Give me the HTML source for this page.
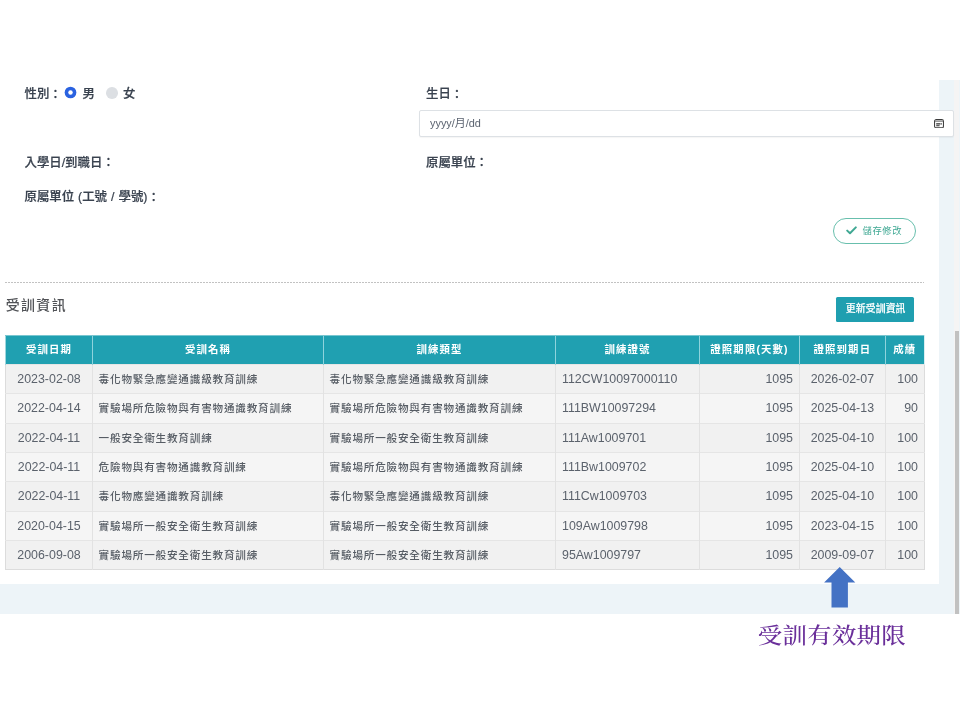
<!DOCTYPE html>
<html lang="zh-Hant">
<head>
<meta charset="utf-8">
<title>受訓資訊</title>
<style>
*{box-sizing:border-box;margin:0;padding:0}
html,body{width:960px;height:720px;overflow:hidden;background:#fff}
body{position:relative;will-change:transform;font-family:"Liberation Sans","Noto Sans CJK TC",sans-serif;color:#3a4351}
.abs{position:absolute}
#shot{left:0;top:80px;width:960px;height:534px;background:#edf4f8;overflow:hidden}
#panel{left:0;top:0;width:939px;height:504px;background:#fff}
#track{left:954px;top:0;width:5px;height:534px;background:#f5f4f4}
#thumb{left:955px;top:251px;width:4px;height:283px;background:#c1c1c1}
.lbl{-webkit-text-stroke:.22px #39424f;word-spacing:.6px;font-size:12.4px;font-weight:500;color:#39424f;white-space:nowrap;line-height:16px;letter-spacing:0}
.k{position:relative;top:.9px}
.radio{width:11.6px;height:11.6px;border-radius:50%}
#dinput{left:419px;top:110px;width:535px;height:27px;background:#fff;border:1px solid #dde1e5;border-radius:2px;box-shadow:0 1px 1px rgba(0,0,0,.04)}
#dinput span{position:absolute;left:10px;top:5px;font-size:10.9px;line-height:14px;color:#5b6370;white-space:nowrap}
#save{left:833px;top:218px;width:82.5px;height:26px;border:1px solid #68bfad;border-radius:14px;background:#fff}
#save span{position:absolute;left:28.5px;top:5.2px;letter-spacing:.6px;font-size:9.3px;line-height:14px;color:#3fa893;white-space:nowrap}
#dots{left:5px;top:282px;width:919px;height:1px;background:repeating-linear-gradient(90deg,#c2c2c2 0,#c2c2c2 2px,transparent 2px,transparent 3px)}
#h2{left:5.7px;top:295.6px;font-size:13.9px;letter-spacing:1.45px;line-height:18px;font-weight:500;color:#505256;white-space:nowrap}
#upd{-webkit-text-stroke:.2px #fff;padding-left:1.4px;left:836px;top:297px;width:78px;height:25px;background:#1f9fb0;border-radius:1.5px;color:#fff;font-size:9.8px;letter-spacing:.15px;font-weight:500;line-height:23.8px;text-align:center;white-space:nowrap}
table{position:absolute;left:5px;top:335px;width:919px;border-collapse:collapse;table-layout:fixed;border:1px solid #dcdcdc}
th{height:28.5px;background:#20a0b1;color:#fff;font-size:10.4px;font-weight:700;text-align:center;border-left:1px solid #8fd3dc;letter-spacing:1.15px;padding:0 0 1.8px 0;white-space:nowrap}
th{border-top:1px solid #79c6d0}
th:first-child{border-left:1px solid #a0d7de}
th:last-child{border-right:1px solid #d9eef1}
td{height:29px;font-size:12.4px;color:#5b626c;border-left:1px solid #e2e2e2;border-top:1px solid #e5e5e5;padding:0 6px;white-space:nowrap;overflow:hidden}
td:first-child{border-left:none}
td.c{font-size:10.6px;letter-spacing:.8px;font-weight:500;color:#565c64;padding-left:5.6px;padding-bottom:1px}
td.d{text-align:center;padding:0}
td.r{text-align:right;padding-right:6px}
tbody tr:nth-child(2) td,tbody tr:nth-child(5) td{height:30px}
tbody tr:nth-child(odd) td{background:#f1f1f1}
tbody tr:nth-child(even) td{background:#f5f5f5}
#cap{left:757.8px;top:619.6px;letter-spacing:.2px;transform:scaleY(.88);transform-origin:0 0;font-family:"Liberation Serif","Noto Serif CJK TC","Noto Serif CJK SC",serif;font-size:24.5px;line-height:36px;color:#6a2f9a;white-space:nowrap;font-weight:500}
</style>
</head>
<body>
<div id="shot" class="abs">
  <div id="panel" class="abs"></div>
  <div id="track" class="abs"></div>
  <div id="thumb" class="abs"></div>
</div>

<div class="abs lbl" style="left:24.5px;top:86.4px">性別<span class="k">：</span></div>
<svg class="abs" style="left:64.3px;top:86.1px" width="13" height="13" viewBox="0 0 13 13"><circle cx="6.5" cy="6.5" r="5.85" fill="#2a62e0"/><circle cx="6.5" cy="6.5" r="2.25" fill="#fff"/></svg>
<div class="abs lbl" style="left:82.5px;top:86.4px">男</div>
<div class="abs radio" style="left:106px;top:87.2px;background:#dcdfe3"></div>
<div class="abs lbl" style="left:123px;top:86.4px">女</div>

<div class="abs lbl" style="left:426px;top:86.4px">生日<span class="k">：</span></div>
<div id="dinput" class="abs"><span>yyyy/月/dd</span>
  <svg class="abs" style="left:514px;top:7.6px" width="10" height="9.4" viewBox="0 0 10 9.4"><rect x=".55" y=".55" width="8.9" height="8.3" rx="1.7" fill="#fff" stroke="#3c3c3c" stroke-width="1.05"/><path d="M1 2.1H9" stroke="#8a8a8a" stroke-width="1.5"/><path d="M2.2 4.9H6.6M7.1 4.9H7.9M2.2 6.7H5.6" stroke="#2e2e2e" stroke-width="1.05"/></svg>
</div>

<div class="abs lbl" style="left:24.5px;top:154.5px">入學日/到職日<span class="k">：</span></div>
<div class="abs lbl" style="left:426px;top:154.5px">原屬單位<span class="k">：</span></div>
<div class="abs lbl" style="left:24.5px;top:189.3px">原屬單位 (工號 / 學號)<span class="k">：</span></div>

<div id="save" class="abs">
  <svg class="abs" style="left:12.3px;top:6.8px" width="11" height="9" viewBox="0 0 11 9"><path d="M1.2 4.6L4 7.3L9.8 1.4" fill="none" stroke="#3fa893" stroke-width="2" stroke-linecap="round" stroke-linejoin="round"/></svg>
  <span>儲存修改</span>
</div>

<div id="dots" class="abs"></div>
<div id="h2" class="abs">受訓資訊</div>
<div id="upd" class="abs">更新受訓資訊</div>

<table>
<colgroup><col style="width:87px"><col style="width:231px"><col style="width:232px"><col style="width:144px"><col style="width:100px"><col style="width:85.7px"><col style="width:39.3px"></colgroup>
<thead><tr><th>受訓日期</th><th>受訓名稱</th><th>訓練類型</th><th>訓練證號</th><th>證照期限(天數)</th><th>證照到期日</th><th>成績</th></tr></thead>
<tbody>
<tr><td class="d">2023-02-08</td><td class="c">毒化物緊急應變通識級教育訓練</td><td class="c">毒化物緊急應變通識級教育訓練</td><td>112CW10097000110</td><td class="r">1095</td><td class="d">2026-02-07</td><td class="r">100</td></tr>
<tr><td class="d">2022-04-14</td><td class="c">實驗場所危險物與有害物通識教育訓練</td><td class="c">實驗場所危險物與有害物通識教育訓練</td><td>111BW10097294</td><td class="r">1095</td><td class="d">2025-04-13</td><td class="r">90</td></tr>
<tr><td class="d">2022-04-11</td><td class="c">一般安全衛生教育訓練</td><td class="c">實驗場所一般安全衛生教育訓練</td><td>111Aw1009701</td><td class="r">1095</td><td class="d">2025-04-10</td><td class="r">100</td></tr>
<tr><td class="d">2022-04-11</td><td class="c">危險物與有害物通識教育訓練</td><td class="c">實驗場所危險物與有害物通識教育訓練</td><td>111Bw1009702</td><td class="r">1095</td><td class="d">2025-04-10</td><td class="r">100</td></tr>
<tr><td class="d">2022-04-11</td><td class="c">毒化物應變通識教育訓練</td><td class="c">毒化物緊急應變通識級教育訓練</td><td>111Cw1009703</td><td class="r">1095</td><td class="d">2025-04-10</td><td class="r">100</td></tr>
<tr><td class="d">2020-04-15</td><td class="c">實驗場所一般安全衛生教育訓練</td><td class="c">實驗場所一般安全衛生教育訓練</td><td>109Aw1009798</td><td class="r">1095</td><td class="d">2023-04-15</td><td class="r">100</td></tr>
<tr><td class="d">2006-09-08</td><td class="c">實驗場所一般安全衛生教育訓練</td><td class="c">實驗場所一般安全衛生教育訓練</td><td>95Aw1009797</td><td class="r">1095</td><td class="d">2009-09-07</td><td class="r">100</td></tr>
</tbody>
</table>

<svg class="abs" style="left:823px;top:566px" width="34" height="43" viewBox="0 0 34 43"><path d="M16.7 1L32.3 16.6H24.9V41.6H8.5V16.6H1.1Z" fill="#4472c4"/></svg>
<div id="cap" class="abs">受訓有效期限</div>
</body>
</html>
